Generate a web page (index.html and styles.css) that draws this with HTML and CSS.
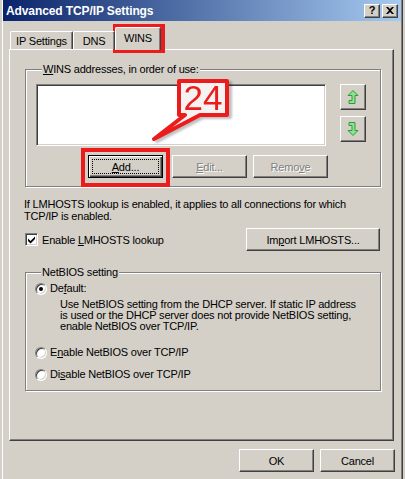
FILE: index.html
```html
<!DOCTYPE html>
<html>
<head>
<meta charset="utf-8">
<title>Advanced TCP/IP Settings</title>
<link rel="stylesheet" href="styles.css">
</head>
<body>
<div class="window">
  <div class="titlebar">
    <span class="title">Advanced TCP/IP Settings</span>
    <div class="tb-buttons">
      <span class="tb-btn help">?</span>
      <span class="tb-btn close"><svg width="8" height="7" viewBox="0 0 8 7"><path d="M0 0h2l2 2 2-2h2L5 3.5 8 7H6L4 5 2 7H0l3-3.5z" fill="#000"/></svg></span>
    </div>
  </div>

  <div class="tabs">
    <div class="tab">IP Settings</div>
    <div class="tab">DNS</div>
    <div class="tab active">WINS</div>
  </div>

  <div class="page">
    <fieldset class="group wins">
      <legend><u>W</u>INS addresses, in order of use:</legend>
      <div class="list-row">
        <div class="listbox"></div>
        <div class="arrows">
          <div class="btn arrow">
            <svg width="12" height="14" viewBox="0 0 12 14"><path d="M6 0.5 L11 5.5 L8 5.5 L8 13.5 L2 13.5 L2 10.5 L5 10.5 L5 5.5 L1 5.5 Z" fill="#8fe08f" stroke="#2f9b3a" stroke-width="1"/></svg>
          </div>
          <div class="btn arrow">
            <svg width="12" height="14" viewBox="0 0 12 14"><path d="M2 0.5 L8 0.5 L8 8.5 L11 8.5 L6 13.5 L1 8.5 L5 8.5 L5 3.5 L2 3.5 Z" fill="#8fe08f" stroke="#2f9b3a" stroke-width="1"/></svg>
          </div>
        </div>
      </div>
      <div class="btn-row">
        <div class="btn default"><span class="focus"><u>A</u>dd...</span></div>
        <div class="btn disabled edit"><u>E</u>dit...</div>
        <div class="btn disabled remove">Remo<u>v</u>e</div>
      </div>
    </fieldset>

    <p class="info">If LMHOSTS lookup is enabled, it applies to all connections for which<br>TCP/IP is enabled.</p>

    <div class="check-row">
      <label class="check">
        <span class="checkbox"><svg width="9" height="9" viewBox="0 0 9 9"><path d="M1 3.5 L3.5 6 L8 1.5 L8 4 L3.5 8.5 L1 6 Z" fill="#000"/></svg></span>
        <span>Enable <u>L</u>MHOSTS lookup</span>
      </label>
      <div class="btn import">Im<u>p</u>ort LMHOSTS...</div>
    </div>

    <fieldset class="group netbios">
      <legend>NetBIOS setting</legend>
      <div class="radio-row first"><span class="radio checked"></span><span>De<u>f</u>ault:</span></div>
      <p class="desc">Use NetBIOS setting from the DHCP server. If static IP address<br>is used or the DHCP server does not provide NetBIOS setting,<br>enable NetBIOS over TCP/IP.</p>
      <div class="radio-row enable"><span class="radio"></span><span>E<u>n</u>able NetBIOS over TCP/IP</span></div>
      <div class="radio-row disable"><span class="radio"></span><span>Di<u>s</u>able NetBIOS over TCP/IP</span></div>
    </fieldset>
  </div>

  <div class="dialog-buttons">
    <div class="btn">OK</div>
    <div class="btn">Cancel</div>
  </div>

  <div class="mark mark-tab"></div>
  <div class="mark mark-add"></div>
  <svg class="callout" width="110" height="80" viewBox="140 70 110 80">
    <path d="M179 81 H227 V115 H200 L154 139 L185 115 H179 Z" fill="#f4f3f1" stroke="#ec1c1c" stroke-width="4" stroke-linejoin="round"/>
    <text x="203" y="110" text-anchor="middle" class="callout-num">24</text>
  </svg>
</div>
</body>
</html>
```

FILE: styles.css
```css
* { box-sizing: border-box; }
html, body { margin: 0; padding: 0; }
body {
  background: #d4d0c8;
  font-family: "Liberation Sans", Arial, sans-serif;
  font-size: 11px;
  letter-spacing: -0.2px;
  color: #000;
}
u { text-decoration: underline; text-underline-offset: 1px; }

.window {
  position: relative;
  width: 405px;
  height: 479px;
  padding: 0 4px 0 3px;
  background: #d4d0c8;
  box-shadow: inset 2px 0 #d4d0c8, inset 3px 0 #fff,
              inset -2px 0 #d4d0c8, inset -3px 0 #404040, inset -4px 0 #808080;
  overflow: hidden;
}

/* title bar */
.titlebar {
  height: 21px;
  display: flex;
  align-items: center;
  justify-content: space-between;
  padding: 0 3px 0 3px;
  background: linear-gradient(to right, #0a246a, #a6caf0);
}
.title {
  color: #fff;
  font-weight: bold;
  font-size: 12px;
  letter-spacing: -0.1px;
}
.tb-buttons { display: flex; gap: 2px; }
.tb-btn {
  width: 16px;
  height: 14px;
  display: flex;
  align-items: center;
  justify-content: center;
  background: #d4d0c8;
  border: 1px solid;
  border-color: #fff #404040 #404040 #fff;
  box-shadow: inset -1px -1px #808080;
  font-weight: bold;
  font-size: 11px;
  line-height: 1;
}

/* tabs */
.tabs {
  display: flex;
  align-items: flex-end;
  height: 28px;
  padding-left: 7px;
  position: relative;
  z-index: 1;
}
.tab {
  height: 18px;
  padding-top: 3px;
  text-align: center;
  border: 1px solid;
  border-bottom: 0;
  border-color: #fff #404040 #fff #fff;
  box-shadow: inset -1px 0 #808080;
  border-radius: 2px 2px 0 0;
  white-space: nowrap;
}
.tab:nth-child(1) { width: 63px; }
.tab:nth-child(2) { width: 42px; }
.tab.active {
  width: 46px;
  height: 23px;
  margin-bottom: -1px;
  padding-top: 4px;
  background: #d4d0c8;
}

/* page */
.page {
  width: 385px;
  height: 392px;
  margin-left: 6px;
  padding: 0 0 0 15px;
  border: 1px solid;
  border-color: #fff #404040 #404040 #fff;
  box-shadow: inset -1px -1px #808080;
}

.group {
  width: 356px;
  margin: 0;
  padding: 0;
  border: 1px solid #808080;
  box-shadow: 1px 1px 0 #fff, inset 1px 1px 0 #fff;
  min-width: 0;
}
.group legend {
  margin-left: 6px;
  padding: 0 1px;
  line-height: 13px;
  background: #d4d0c8;
}

.wins { margin-top: 13px; padding: 8px 0 8px 10px; }
.list-row { display: flex; align-items: flex-start; }
.listbox {
  width: 290px;
  height: 62px;
  background: #fff;
  border: 1px solid;
  border-color: #808080 #fff #fff #808080;
  box-shadow: inset 1px 1px #404040, inset -1px -1px #d4d0c8;
}
.arrows {
  display: flex;
  flex-direction: column;
  gap: 6px;
  margin-left: 14px;
}

.btn {
  height: 23px;
  width: 75px;
  display: flex;
  align-items: center;
  justify-content: center;
  background: #d4d0c8;
  border: 1px solid;
  border-color: #fff #404040 #404040 #fff;
  box-shadow: inset -1px -1px #808080;
  white-space: nowrap;
}
.btn.arrow { width: 26px; height: 26px; }
.btn.default {
  border-color: #000;
  box-shadow: inset 1px 1px #fff, inset -1px -1px #404040, inset -2px -2px #808080;
  padding: 3px;
}
.btn .focus {
  flex: 1;
  align-self: stretch;
  display: flex;
  align-items: center;
  justify-content: center;
  border: 1px dotted #000;
}
.btn.disabled { color: #808080; text-shadow: 1px 1px 0 #fff; }

.btn-row { display: flex; margin-top: 9px; }
.btn-row .default { margin-left: 52px; }
.btn-row .edit { margin-left: 9px; }
.btn-row .remove { margin-left: 6px; }

.info {
  margin: 11px 0 0 -1px;
  line-height: 12px;
}

.check-row {
  display: flex;
  align-items: center;
  justify-content: space-between;
  width: 355px;
  margin-top: 6px;
}
.check { display: flex; align-items: center; gap: 4px; }
.checkbox {
  width: 13px;
  height: 13px;
  display: flex;
  align-items: center;
  justify-content: center;
  background: #fff;
  border: 1px solid;
  border-color: #808080 #fff #fff #808080;
  box-shadow: inset 1px 1px #404040, inset -1px -1px #d4d0c8;
}
.btn.import { width: 134px; }

.netbios { margin-top: 15px; padding: 3px 0 9px 9px; }
.radio-row { display: flex; align-items: center; gap: 3px; line-height: 13px; }
.radio {
  width: 12px;
  height: 12px;
  border-radius: 50%;
  background: #fff;
  border: 1px solid;
  border-color: #808080 #fff #fff #808080;
  box-shadow: inset 1px 1px #404040, inset -1px -1px #d4d0c8;
  display: flex;
  align-items: center;
  justify-content: center;
}
.radio.checked::before {
  content: "";
  width: 4px;
  height: 4px;
  border-radius: 50%;
  background: #000;
}
.desc {
  margin: 4px 0 0 25px;
  line-height: 11px;
}
.radio-row.enable { margin-top: 14px; }
.radio-row.disable { margin-top: 9px; }

.dialog-buttons {
  display: flex;
  justify-content: flex-end;
  gap: 6px;
  margin-top: 8px;
  padding-right: 6px;
}

/* annotation overlays */
.mark {
  position: absolute;
  border: 4px solid #ec1c1c;
}
.mark-tab { left: 113px; top: 24px; width: 52px; height: 29px; }
.mark-add { left: 81px; top: 148px; width: 89px; height: 39px; }
.callout {
  position: absolute;
  left: 140px;
  top: 70px;
  filter: drop-shadow(3px 2px 1px rgba(0,0,0,0.25));
}
.callout-num {
  font-family: "Liberation Sans", Arial, sans-serif;
  font-size: 35px;
  letter-spacing: 0;
  fill: #ec1c1c;
}
```
